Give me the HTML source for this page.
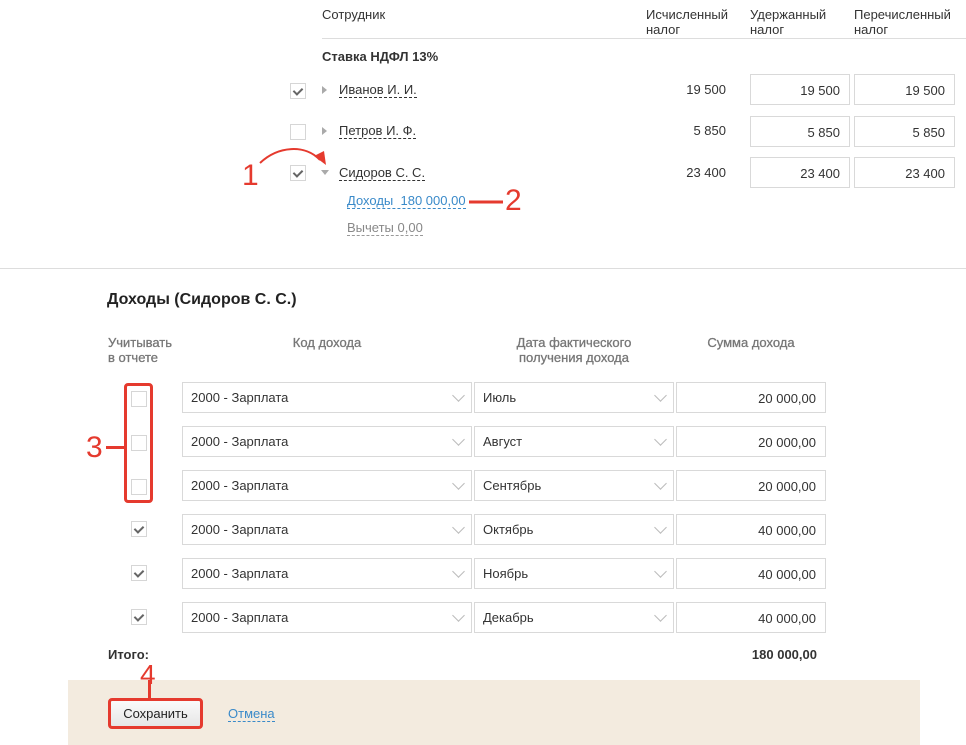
<!DOCTYPE html>
<html><head><meta charset="utf-8"><style>
*{box-sizing:border-box;margin:0;padding:0}
body{width:966px;height:745px;background:#fff;font-family:"Liberation Sans",Arial,sans-serif;font-size:13px;color:#333;position:relative;overflow:hidden}
.a{position:absolute}
.inp{position:absolute;border:1px solid #d9d9d9;background:#fff;height:31px;line-height:31px;text-align:right;padding-right:9px;font-size:13px;color:#333}
.cb{position:absolute;width:16px;height:16px;border:1px solid #d6d6d6;background:#fff}
.cb.on::after{content:"";position:absolute;left:4px;top:2px;width:4px;height:7px;border:solid #666;border-width:0 2px 2px 0;transform:rotate(45deg)}
.name{position:absolute;color:#333;border-bottom:1px dashed #333;line-height:15px;font-size:13px}
.sel{position:absolute;border:1px solid #d9d9d9;background:#fff;height:31px;line-height:29px;padding-left:8px;font-size:13px;color:#333}
.sel::after{content:"";position:absolute;right:8px;top:8px;width:8px;height:8px;border:solid #bbb;border-width:0 1px 1px 0;transform:rotate(45deg)}
.th{position:absolute;color:#777;font-size:13px;line-height:15px;text-align:center;-webkit-text-stroke:0.3px #777}
.red{color:#e53a2e;font-size:30px;position:absolute;line-height:30px}
</style></head><body>
<div class="a" style="left:322px;top:7px">Сотрудник</div>
<div class="a" style="left:646px;top:7px;line-height:15px">Исчисленный<br>налог</div>
<div class="a" style="left:750px;top:7px;line-height:15px">Удержанный<br>налог</div>
<div class="a" style="left:854px;top:7px;line-height:15px">Перечисленный<br>налог</div>
<div class="a" style="left:322px;top:38px;width:644px;height:1px;background:#ddd"></div>
<div class="a" style="left:322px;top:49px;font-weight:bold">Ставка НДФЛ 13%</div>

<div class="cb on" style="left:290px;top:83px"></div>
<div class="a" style="left:322px;top:86px;border-left:5px solid #aaa;border-top:4px solid transparent;border-bottom:4px solid transparent"></div>
<div class="name" style="left:339px;top:82px">Иванов И. И.</div>
<div class="a" style="left:646px;top:82px;width:80px;text-align:right">19 500</div>
<div class="inp" style="left:750px;top:74px;width:100px">19 500</div>
<div class="inp" style="left:854px;top:74px;width:101px">19 500</div>

<div class="cb" style="left:290px;top:124px"></div>
<div class="a" style="left:322px;top:127px;border-left:5px solid #aaa;border-top:4px solid transparent;border-bottom:4px solid transparent"></div>
<div class="name" style="left:339px;top:123px">Петров И. Ф.</div>
<div class="a" style="left:646px;top:123px;width:80px;text-align:right">5 850</div>
<div class="inp" style="left:750px;top:116px;width:100px">5 850</div>
<div class="inp" style="left:854px;top:116px;width:101px">5 850</div>

<div class="cb on" style="left:290px;top:165px"></div>
<div class="a" style="left:321px;top:170px;border-top:5px solid #aaa;border-left:4px solid transparent;border-right:4px solid transparent"></div>
<div class="name" style="left:339px;top:165px">Сидоров С. С.</div>
<div class="a" style="left:646px;top:165px;width:80px;text-align:right">23 400</div>
<div class="inp" style="left:750px;top:157px;width:100px">23 400</div>
<div class="inp" style="left:854px;top:157px;width:101px">23 400</div>

<div class="name" style="left:347px;top:193px;color:#3a8ac9;border-color:#3a8ac9">Доходы&nbsp; 180 000,00</div>
<div class="name" style="left:347px;top:220px;color:#888;border-color:#999">Вычеты 0,00</div>

<svg class="a" style="left:240px;top:140px" width="300" height="80">
<path d="M20 23 C38 6 65 4 80 20" fill="none" stroke="#e53a2e" stroke-width="2"/>
<path d="M74 16 L86 25 L84 11 Z" fill="#e53a2e"/>
<line x1="229" y1="62" x2="263" y2="62" stroke="#e53a2e" stroke-width="3"/>
</svg>
<div class="red" style="left:242px;top:161px">1</div>
<div class="red" style="left:505px;top:186px">2</div>

<div class="a" style="left:0;top:268px;width:966px;height:1px;background:#ddd"></div>
<div class="a" style="left:107px;top:291px;font-weight:bold;font-size:16px;color:#222">Доходы (Сидоров С. С.)</div>
<div class="th" style="left:108px;top:335px;text-align:left">Учитывать<br>в отчете</div>
<div class="th" style="left:182px;top:335px;width:290px">Код дохода</div>
<div class="th" style="left:474px;top:335px;width:200px">Дата фактического<br>получения дохода</div>
<div class="th" style="left:676px;top:335px;width:150px">Сумма дохода</div>

<div class="cb" style="left:131px;top:391px"></div><div class="sel" style="left:182px;top:382px;width:290px">2000 - Зарплата</div><div class="sel" style="left:474px;top:382px;width:200px">Июль</div><div class="inp" style="left:676px;top:382px;width:150px">20 000,00</div>
<div class="cb" style="left:131px;top:435px"></div><div class="sel" style="left:182px;top:426px;width:290px">2000 - Зарплата</div><div class="sel" style="left:474px;top:426px;width:200px">Август</div><div class="inp" style="left:676px;top:426px;width:150px">20 000,00</div>
<div class="cb" style="left:131px;top:479px"></div><div class="sel" style="left:182px;top:470px;width:290px">2000 - Зарплата</div><div class="sel" style="left:474px;top:470px;width:200px">Сентябрь</div><div class="inp" style="left:676px;top:470px;width:150px">20 000,00</div>
<div class="cb on" style="left:131px;top:521px"></div><div class="sel" style="left:182px;top:514px;width:290px">2000 - Зарплата</div><div class="sel" style="left:474px;top:514px;width:200px">Октябрь</div><div class="inp" style="left:676px;top:514px;width:150px">40 000,00</div>
<div class="cb on" style="left:131px;top:565px"></div><div class="sel" style="left:182px;top:558px;width:290px">2000 - Зарплата</div><div class="sel" style="left:474px;top:558px;width:200px">Ноябрь</div><div class="inp" style="left:676px;top:558px;width:150px">40 000,00</div>
<div class="cb on" style="left:131px;top:609px"></div><div class="sel" style="left:182px;top:602px;width:290px">2000 - Зарплата</div><div class="sel" style="left:474px;top:602px;width:200px">Декабрь</div><div class="inp" style="left:676px;top:602px;width:150px">40 000,00</div>

<div class="a" style="left:124px;top:383px;width:29px;height:120px;border:3px solid #e53a2e;border-radius:4px"></div>
<div class="a" style="left:106px;top:446px;width:18px;height:3px;background:#e53a2e"></div>
<div class="red" style="left:86px;top:433px">3</div>

<div class="a" style="left:108px;top:647px;font-weight:bold">Итого:</div>
<div class="a" style="left:676px;top:647px;width:141px;text-align:right;font-weight:bold">180 000,00</div>

<div class="a" style="left:68px;top:680px;width:852px;height:65px;background:#f3ebdf"></div>
<div class="a" style="left:108px;top:698px;width:95px;height:31px;border:3px solid #e53a2e;border-radius:4px;background:linear-gradient(#fafafa,#e6e6e6);text-align:center;line-height:25px;color:#222">Сохранить</div>
<div class="a" style="left:148px;top:680px;width:3px;height:18px;background:#e53a2e"></div>
<div class="red" style="left:140px;top:660px;font-size:28px">4</div>
<div class="name" style="left:228px;top:706px;color:#3a8ac9;border-color:#3a8ac9">Отмена</div>
</body></html>
